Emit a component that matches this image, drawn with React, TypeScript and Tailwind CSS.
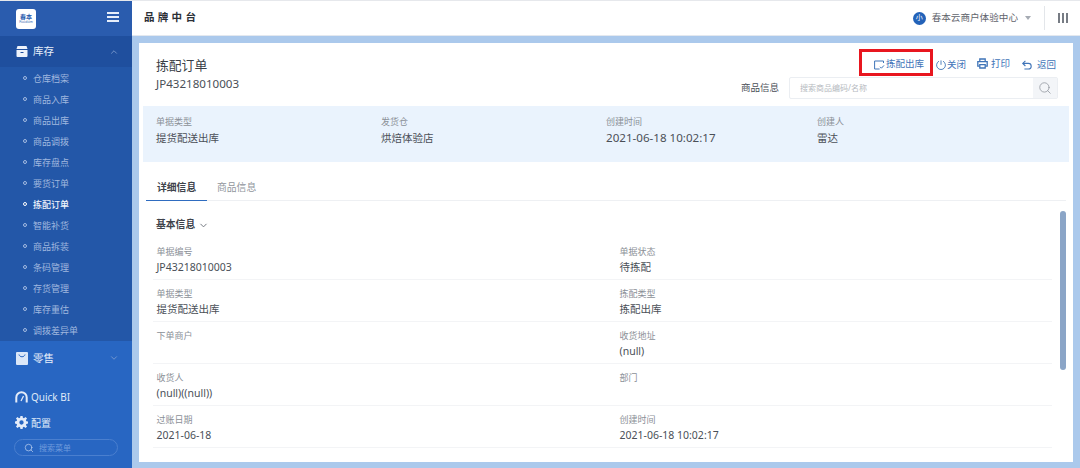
import { ChevronDown, ChevronUp, Search } from "lucide-react";

const font = { fontFamily: '"Noto Sans", "Noto Sans CJK SC", sans-serif' };

const subItems = [
  "仓库档案",
  "商品入库",
  "商品出库",
  "商品调拨",
  "库存盘点",
  "要货订单",
  "拣配订单",
  "智能补货",
  "商品拆装",
  "条码管理",
  "存货管理",
  "库存重估",
  "调拨差异单",
];

const summary = [
  { label: "单据类型", value: "提货配送出库", width: "w-[225px]", size: "text-[10.5px]" },
  { label: "发货仓", value: "烘焙体验店", width: "w-[225px]", size: "text-[10.5px]" },
  { label: "创建时间", value: "2021-06-18 10:02:17", width: "w-[211px]", size: "text-[11.6px]" },
  { label: "创建人", value: "雷达", width: "w-[100px]", size: "text-[10.5px]" },
];

const details = [
  ["单据编号", "JP43218010003", "单据状态", "待拣配"],
  ["单据类型", "提货配送出库", "拣配类型", "拣配出库"],
  ["下单商户", "", "收货地址", "(null)"],
  ["收货人", "(null)((null))", "部门", ""],
  ["过账日期", "2021-06-18", "创建时间", "2021-06-18 10:02:17"],
];

function Sidebar() {
  return (
    <aside className="flex w-[132px] shrink-0 flex-col bg-[#2866c2]">
      <div className="flex h-[35px] items-center justify-between bg-[#2a5cae] pl-[16px] pr-[13px]">
        <div className="flex h-[20px] w-[20px] flex-col items-center justify-center rounded-[3px] bg-white leading-none text-[#2a5cae]">
          <span className="text-[6px] font-bold">春本</span>
          <span className="text-[3.5px]">Foodom</span>
        </div>
        <svg width="12" height="10" viewBox="0 0 12 10" fill="#e6eefa" className="mb-[3px]">
          <rect width="12" height="2" />
          <rect y="4" width="12" height="2" />
          <rect y="8" width="12" height="2" />
        </svg>
      </div>
      <div className="flex h-[31px] items-center justify-between bg-[#1f4f9e] pl-[16px] pr-[13px]">
        <div className="flex items-center gap-[5px] text-[10.5px] text-[#e8effa]">
          <svg width="12" height="11" viewBox="0 0 12 11" fill="#eef3fb">
            <path d="M1.5 0h9l1 3H.5z" />
            <path d="M.5 4h11v6a1 1 0 0 1-1 1h-9a1 1 0 0 1-1-1zm4 2v1h3V6z" fillRule="evenodd" />
          </svg>
          <span className="pt-[1px]">库存</span>
        </div>
        <ChevronUp size={10} className="text-[#7f9fd0]" />
      </div>
      <ul className="flex flex-col bg-[#2357a8]">
        {subItems.map((item) => (
          <li
            key={item}
            className={`flex h-[21.08px] items-center gap-[6px] pl-[23px] text-[9px] ${
              item === "拣配订单" ? "font-medium text-[#eef3fb]" : "text-[#a0b8df]"
            }`}
          >
            <span className={`h-[4px] w-[4px] rounded-full border ${item === "拣配订单" ? "border-white" : "border-[#a5bce2]"}`} />
            <span className="pt-[1.5px]">{item}</span>
          </li>
        ))}
      </ul>
      <div className="flex h-[34px] items-center justify-between pl-[16px] pr-[13px]">
        <div className="flex items-center gap-[5px] text-[10.5px] text-[#e8effa]">
          <svg width="12" height="13" viewBox="0 0 12 13">
            <rect width="12" height="13" rx="1" fill="#dbe7f8" />
            <path d="M3 2.5c.6 3 5.4 3 6 0" fill="none" stroke="#2866c2" strokeWidth="1" />
          </svg>
          <span className="pt-[1px]">零售</span>
        </div>
        <ChevronDown size={10} className="text-[#7f9fd0]" />
      </div>
      <div className="mt-[9px] flex h-[26px] items-center gap-[3px] pl-[15px] text-[10px] text-[#dfe9f8]">
        <svg width="13" height="12" viewBox="0 0 13 12" fill="none" stroke="#e4ecf9" strokeWidth="2">
          <path d="M1.3 11.5V6.5a5.2 5.2 0 0 1 10.4 0v5" />
          <path d="M6 10l2.5-5" strokeWidth="1.2" />
        </svg>
        Quick BI
      </div>
      <div className="flex h-[25px] items-center gap-[3px] pl-[15px] text-[10px] text-[#dfe9f8]">
        <svg width="13" height="13" viewBox="0 0 24 24" fill="#e4ecf9">
          <path
            fillRule="evenodd"
            d="M10 0h4l.6 3.3 2 .8L19.4 2l2.8 2.8-2.1 2.8.8 2L24 10v4l-3.1.6-.8 2 2.1 2.6-2.8 2.8-2.8-2.1-2 .8L14 24h-4l-.6-3.3-2-.8L4.6 22l-2.8-2.8 2.1-2.6-.8-2L0 14v-4l3.1-.6.8-2-2.1-2.6L4.6 2l2.8 2.1 2-.8zM12 8a4 4 0 1 0 0 8 4 4 0 0 0 0-8z"
          />
        </svg>
        <span className="pt-[1px]">配置</span>
      </div>
      <div className="mx-[14px] mt-[4px] flex h-[17px] w-[104px] items-center gap-[5px] rounded-full border border-[#4a7fcf] pl-[9px] text-[8px] text-[#6f9bdc]">
        <Search size={10} strokeWidth={1.6} className="text-[#c5d7f1]" />
        搜索菜单
      </div>
    </aside>
  );
}

function Header() {
  return (
    <header className="flex h-[35px] shrink-0 items-center justify-between border-b border-[#e3e8ef] bg-white pl-[12px] pr-[12px]">
      <div className="text-[10.5px] font-bold tracking-[3.3px] text-[#2b2f36]">品牌中台</div>
      <div className="flex items-center">
        <span className="flex h-[13px] w-[13px] items-center justify-center rounded-full bg-[#2362b8] text-[7px] text-white">小</span>
        <span className="ml-[6px] text-[9.6px] text-[#5f646c]">春本云商户体验中心</span>
        <span className="ml-[7px] h-0 w-0 border-x-[3.5px] border-t-[4px] border-x-transparent border-t-[#a6abb3]" />
        <span className="ml-[13px] h-[24px] w-px bg-[#e3e6ea]" />
        <div className="ml-[13px] flex gap-[2px]">
          <span className="h-[10px] w-[2px] bg-[#777c84]" />
          <span className="h-[10px] w-[2px] bg-[#777c84]" />
          <span className="h-[10px] w-[2px] bg-[#777c84]" />
        </div>
      </div>
    </header>
  );
}

function Actions() {
  return (
    <div className="mr-[2px] flex items-end text-[9.5px] text-[#3f74b8]">
      <div className="flex h-[27px] w-[74px] items-center justify-end gap-[1px] border-[3px] border-[#e8161f] pr-[6px] pt-[4px]">
        <svg width="11" height="10" viewBox="0 0 11 10" fill="none" stroke="#3f74b8" strokeWidth="1">
          <path d="M9.5 3V1H.6v8h5" />
          <path d="M6 6.8l1.4 1.4L10 5.4" />
        </svg>
        拣配出库
      </div>
      <div className="mb-[4px] ml-[3px] flex items-center gap-[1px]">
        <svg width="10" height="10" viewBox="0 0 10 10" fill="none" stroke="#3f74b8" strokeWidth="0.9">
          <path d="M3 1.2a4.4 4.4 0 1 0 4 0" />
          <path d="M5 .4v4.4" />
        </svg>
        关闭
      </div>
      <div className="mb-[5px] ml-[11px] flex items-center gap-[3px]">
        <svg width="11" height="11" viewBox="0 0 11 11" fill="none" stroke="#3f74b8" strokeWidth="1.3">
          <path d="M2.8 3.6V1h5.4v2.6" />
          <path d="M2.6 8.2H.8V3.6h9.4v4.6H8.4" />
          <path d="M2.8 6.6h5.4V10H2.8z" />
        </svg>
        打印
      </div>
      <div className="mb-[4px] ml-[12px] flex items-center gap-[5px]">
        <svg width="10" height="10" viewBox="0 0 10 10" fill="none" stroke="#3f74b8" strokeWidth="1.1">
          <path d="M3.4 .8L.8 3.4l2.6 2.6" />
          <path d="M.8 3.4h5.6a2.8 2.8 0 0 1 0 5.6H2.4" />
        </svg>
        返回
      </div>
    </div>
  );
}

function Card() {
  return (
    <section className="relative flex flex-1 flex-col overflow-hidden bg-white">
      <div className="flex h-[63px] justify-between pl-[17px] pr-[15px]">
        <div className="pt-[13px]">
          <h1 className="text-[12.8px] leading-[18px] text-[#3a3f47]">拣配订单</h1>
          <div className="mt-[2px] text-[11.6px] leading-[16px] text-[#4a4f57]">JP43218010003</div>
        </div>
        <div className="flex flex-col items-end pt-[6px]">
          <Actions />
          <div className="mt-[1px] flex items-center">
            <span className="mr-[10px] text-[9.5px] text-[#4a4f57]">商品信息</span>
            <div className="flex h-[22px] w-[269px] items-center justify-between rounded-[2px] border border-[#ebeef2] text-[8px] text-[#b6bac0]">
              <span className="pl-[10px]">搜索商品编码/名称</span>
              <span className="flex h-full w-[24px] items-center justify-center bg-[#f3f5f8]">
                <Search size={14} strokeWidth={1.3} className="text-[#8d939b]" />
              </span>
            </div>
          </div>
        </div>
      </div>
      <div className="mx-[4px] flex h-[56px] bg-[#eaf3fd] pl-[13px] pt-[9px]">
        {summary.map((item) => (
          <div key={item.label} className={item.width}>
            <div className="text-[9px] leading-[14px] text-[#8b9097]">{item.label}</div>
            <div className={`mt-[1px] leading-[16px] text-[#4a4f57] ${item.size}`}>{item.value}</div>
          </div>
        ))}
      </div>
      <div className="mx-[7px] mt-[15px] flex h-[24px] border-b border-[#eef0f3] text-[9.8px]">
        <div className="-mb-px w-[61px] border-b-[1.5px] border-[#2f6cc0] pl-[11px] pt-[4px] font-bold text-[#3e434b]">详细信息</div>
        <div className="pl-[10px] pt-[4px] text-[#90959c]">商品信息</div>
      </div>
      <div className="flex h-[32px] items-end gap-[3px] pl-[17px] text-[9.8px] font-bold text-[#3e434b]">
        基本信息
        <ChevronDown size={11} strokeWidth={2} className="mb-[2px] text-[#6a6f77]" />
      </div>
      <div className="mt-[5px] flex flex-col pl-[14px] pr-[21px]">
        {details.map(([leftLabel, leftValue, rightLabel, rightValue]) => (
          <div key={leftLabel} className="grid grid-cols-[463px_1fr]">
            <DetailCell label={leftLabel} value={leftValue} />
            <DetailCell label={rightLabel} value={rightValue} />
          </div>
        ))}
      </div>
      <div className="absolute right-[7px] top-[168px] h-[159px] w-[6px] rounded-full bg-[#8ba5c7]" />
    </section>
  );
}

function DetailCell({ label, value }: { label: string; value: string }) {
  return (
    <div className="h-[42px] border-b border-[#f3f4f6] pl-[3.5px] pt-[7px]">
      <div className="text-[9px] leading-[14px] text-[#8b9097]">{label}</div>
      <div className="text-[10.5px] leading-[16px] text-[#4a4f57]">{value}</div>
    </div>
  );
}

export default function App() {
  return (
    <div className="flex h-[468px] w-[1080px] overflow-hidden border-t border-[#e6e8ec]" style={font}>
      <Sidebar />
      <main className="flex min-w-0 flex-1 flex-col bg-[#abc9ec]">
        <Header />
        <div className="flex flex-1 pb-[6px] pl-[7px] pr-[7px] pt-[7px]">
          <Card />
        </div>
      </main>
    </div>
  );
}
